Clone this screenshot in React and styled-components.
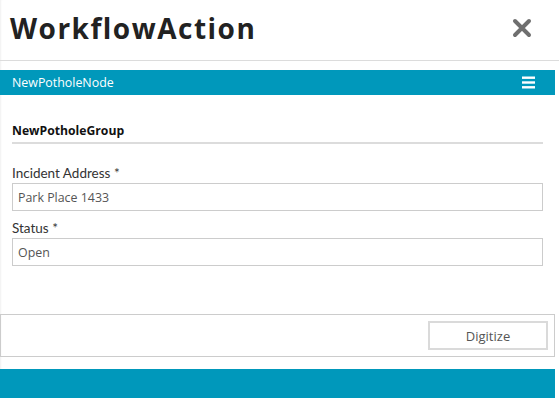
import React from "react";
import styled, { createGlobalStyle } from "styled-components";

const Global = createGlobalStyle`
  html, body { margin: 0; padding: 0; background: #fff; }
  body { font-family: "Open Sans", "Noto Sans", sans-serif; }
  * { box-sizing: border-box; }
`;

const Page = styled.div`
  width: 559px;
  height: 398px;
  overflow: hidden;
  display: flex;
  flex-direction: column;
  box-shadow: inset 2px 0 2px -1px rgba(0,0,0,0.06);
  & > * { flex-shrink: 0; }
`;

const Header = styled.div`
  height: 61px;
  display: flex;
  align-items: center;
  justify-content: space-between;
  padding: 0 27px 4px 10px;
  border-bottom: 1px solid #dcdcdc;
`;

const Title = styled.h1`
  margin: 0;
  font-family: "Open Sans", sans-serif;
  font-weight: 700;
  font-size: 28px;
  letter-spacing: 1.5px;
  color: #222;
`;

const Close = styled.button`
  border: 0;
  background: none;
  padding: 0;
  width: 20px;
  height: 20px;
  display: flex;
  cursor: pointer;
`;

const Body = styled.div`
  width: 555px;
  display: flex;
  flex-direction: column;
  & > * { flex-shrink: 0; }
`;

const NodeBar = styled.div`
  margin-top: 9px;
  height: 25px;
  background: #0098bb;
  color: #fff;
  display: flex;
  align-items: center;
  justify-content: space-between;
  padding: 0 20px 0 12px;
  font-size: 12.4px;
`;

const Form = styled.div`
  padding: 27px 12px 0 12px;
  display: flex;
  flex-direction: column;
`;

const GroupTitle = styled.div`
  font-size: 12.2px;
  line-height: 18px;
  font-weight: 700;
  color: #111;
  padding-bottom: 2px;
  border-bottom: 2px solid #dcdcdc;
  margin-bottom: 20px;
`;

const Field = styled.div`
  display: flex;
  flex-direction: column;
  & + & { margin-top: 8px; }
`;

const Label = styled.label`
  font-family: "Lato", "Open Sans", sans-serif;
  font-size: 13.5px;
  color: #333;
  line-height: 18px;
  margin-bottom: 1px;
`;

const Input = styled.div`
  height: 28px;
  border: 1px solid #cccccc;
  padding: 0 5px;
  display: flex;
  align-items: center;
  font-size: 12.4px;
  color: #555;
`;

const Footer = styled.div`
  margin-top: 48px;
  height: 43px;
  border: 1px solid #cccccc;
  display: flex;
  align-items: center;
  justify-content: flex-end;
  padding: 0 6px 0 0;
`;

const Button = styled.button`
  width: 120px;
  height: 29px;
  border: 2px solid #dadada;
  background: #fff;
  font-family: "Open Sans", sans-serif;
  font-size: 13px;
  color: #555;
`;

const BottomBar = styled.div`
  margin-top: 12px;
  height: 29px;
  background: #0098bb;
`;

export default function App() {
  return (
    <>
      <Global />
      <Page>
        <Header>
          <Title>WorkflowAction</Title>
          <Close aria-label="Close">
            <svg width="20" height="20" viewBox="0 0 20 20">
              <path d="M3 3 L17 17 M17 3 L3 17" stroke="#6f6f6f" strokeWidth="4" strokeLinecap="round" />
            </svg>
          </Close>
        </Header>
        <Body>
          <NodeBar>
            <span>NewPotholeNode</span>
            <svg width="13" height="13" viewBox="0 0 13 13">
              <rect x="0" y="0.5" width="13" height="2.4" fill="#fff" />
              <rect x="0" y="5.3" width="13" height="2.4" fill="#fff" />
              <rect x="0" y="10.1" width="13" height="2.4" fill="#fff" />
            </svg>
          </NodeBar>
          <Form>
            <GroupTitle>NewPotholeGroup</GroupTitle>
            <Field>
              <Label>Incident Address *</Label>
              <Input>Park Place 1433</Input>
            </Field>
            <Field>
              <Label>Status *</Label>
              <Input>Open</Input>
            </Field>
          </Form>
          <Footer>
            <Button>Digitize</Button>
          </Footer>
          <BottomBar />
        </Body>
      </Page>
    </>
  );
}
